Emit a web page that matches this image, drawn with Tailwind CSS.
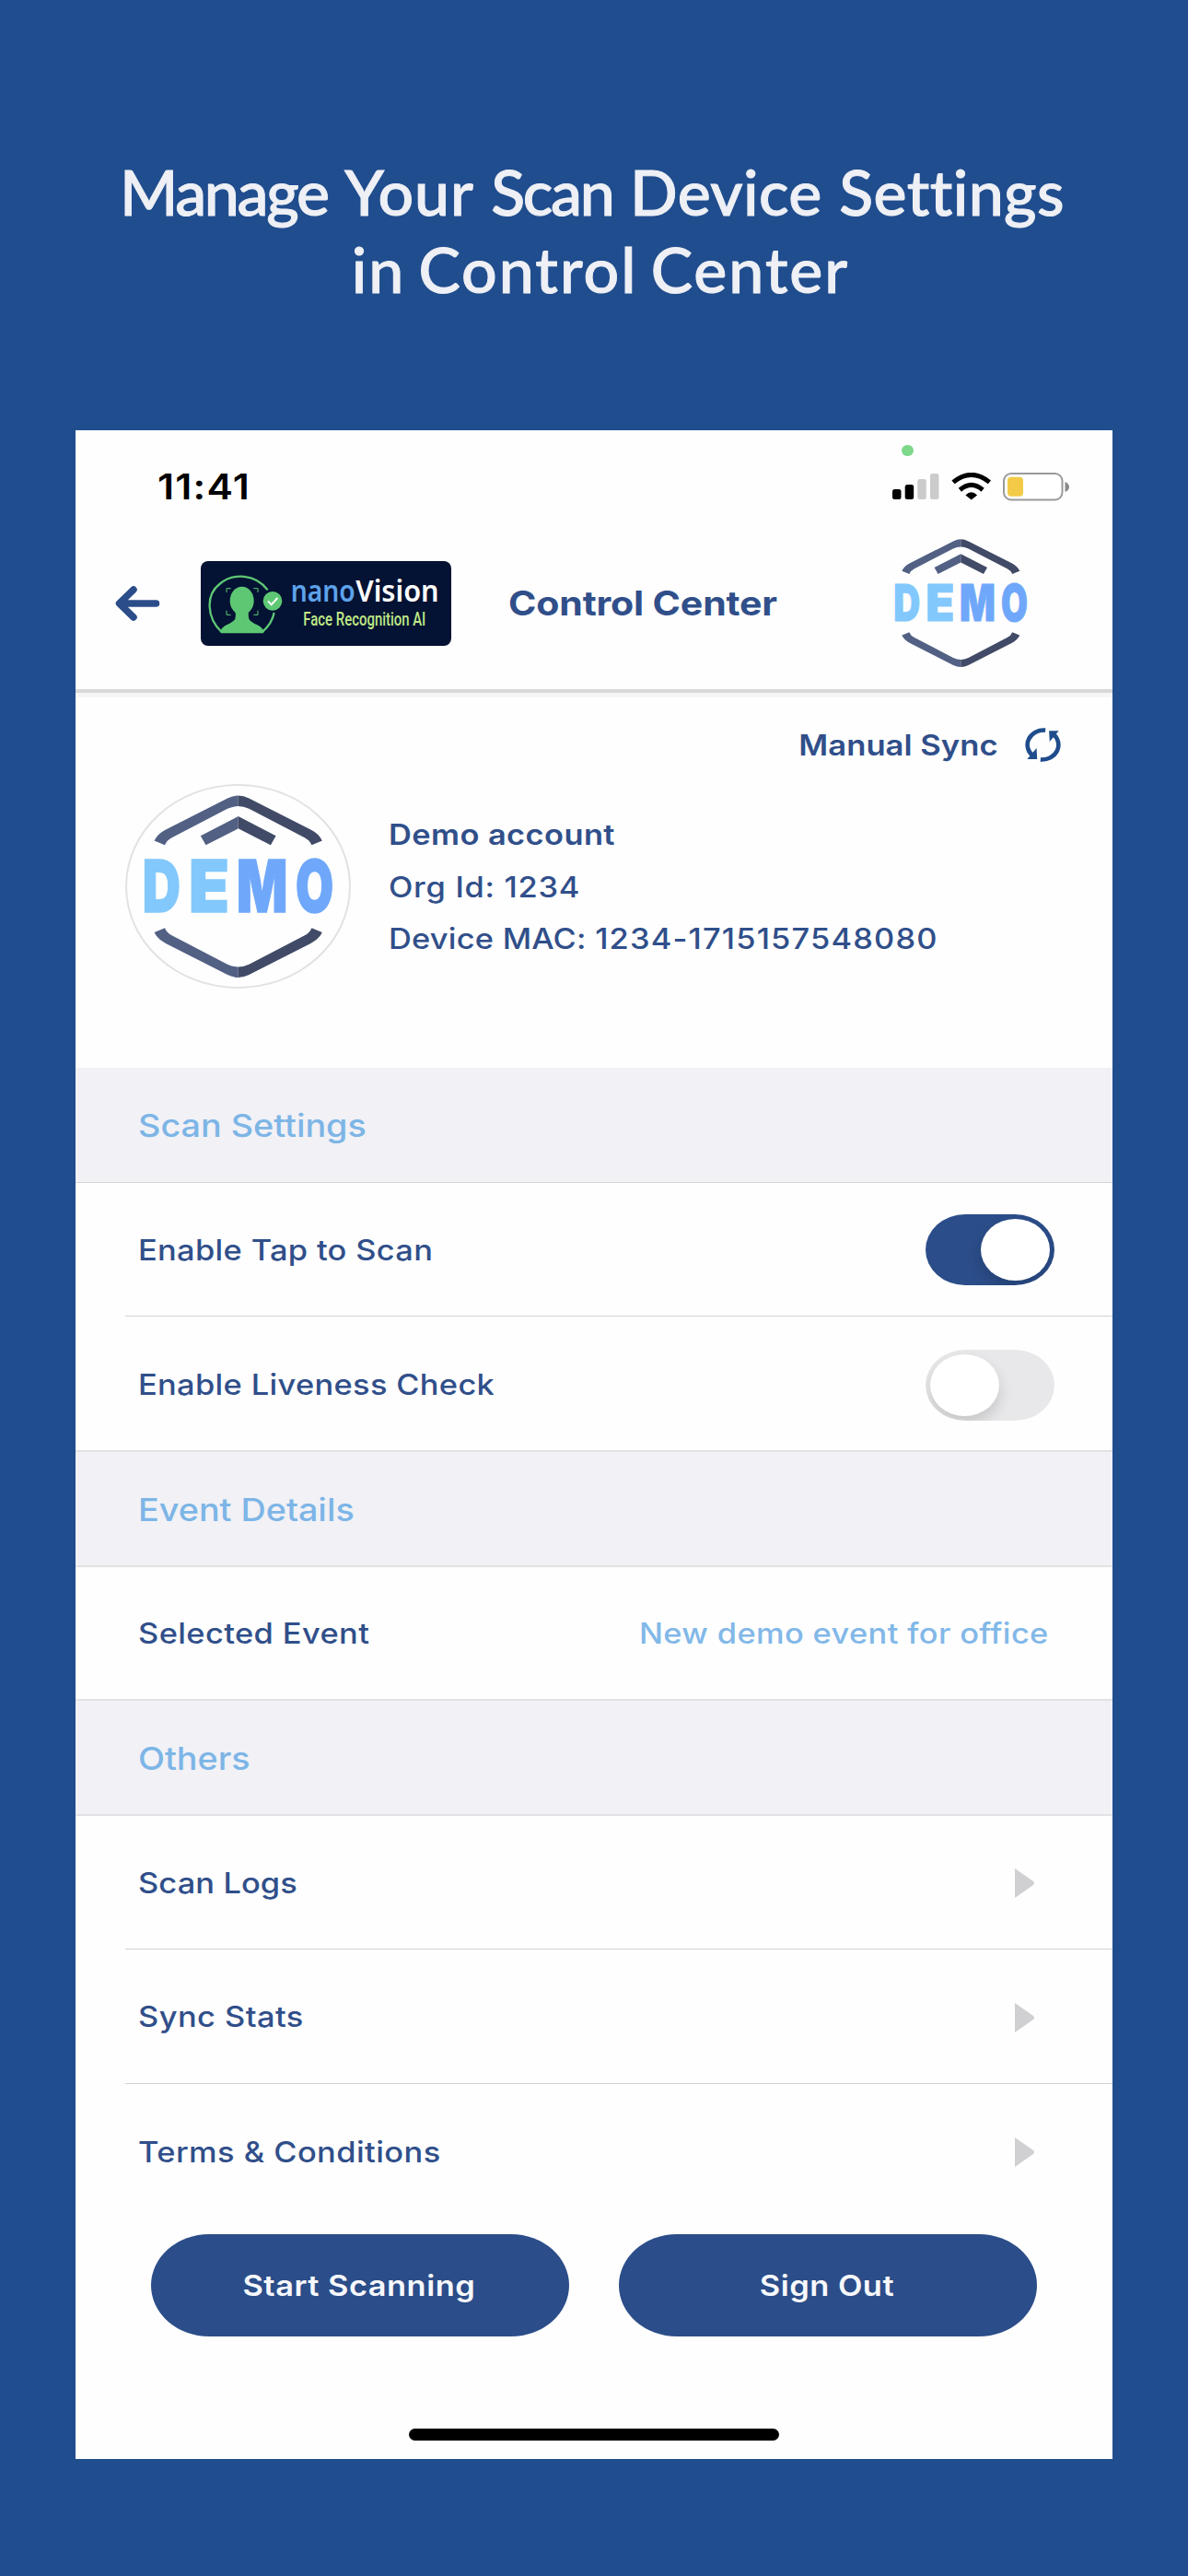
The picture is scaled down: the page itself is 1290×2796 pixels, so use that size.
<!DOCTYPE html>
<html lang="en">
<head>
<meta charset="utf-8">
<title>Control Center</title>
<script src="https://cdn.jsdelivr.net/npm/@tailwindcss/browser@4"></script>
</head>
<body class="w-[1290px] h-[2796px] overflow-hidden bg-[#204d8e] font-['Inter',sans-serif] flex flex-col items-center">

<!-- shared symbols -->
<svg class="hidden">
  <symbol id="demo" viewBox="156 863 206 198">
    <defs>
      <path id="bar" d="M258.7 863.5Q253 863.5 247 866.5L180 900.5Q171 905 167.6 912.5L179 917.3Q181 912 187 909L247 877.8Q253 875 258.7 875Z"/>
      <path id="chev" d="M258.7 886L217.8 907.3L223.5 917.3L258.7 899.3Z"/>
    </defs>
    <g fill="#526084">
      <use href="#bar"/><use href="#chev"/>
      <use href="#bar" transform="translate(0 1924.5) scale(1 -1)"/>
    </g>
    <g fill="#414a66" transform="translate(517.4 0) scale(-1 1)">
      <use href="#bar"/><use href="#chev"/>
      <use href="#bar" transform="translate(0 1924.5) scale(1 -1)"/>
    </g>
    <g font-family="Inter, sans-serif" font-size="79" font-weight="900" fill="#82c8fc" stroke="#82c8fc" stroke-width="1.5">
      <text transform="translate(154.8 990.2) scale(.723 1)">D</text>
      <text transform="translate(205 990.2) scale(.909 1)">E</text>
      <text transform="translate(257 990.2) scale(.733 1)" fill="#6fa8fa" stroke="#6fa8fa">M</text>
      <text transform="translate(321 990.2) scale(.672 1)" fill="#6fa8fa" stroke="#6fa8fa">O</text>
    </g>
  </symbol>
  <symbol id="tri" viewBox="0 0 21 32"><path d="M0 0L20 14Q22 16 20 18L0 32Z" fill="#d0d0d2"/></symbol>
</svg>

<h1 class="pt-[166px] text-center font-['Lato',sans-serif] font-medium text-[68px] leading-[84px] text-[#eef0f5] whitespace-nowrap [-webkit-text-stroke:1px_#eef0f5]">
  <span class="block tracking-[0.4px] [word-spacing:1px] -translate-x-[2px]"><span class="tracking-[-2.3px]">Manage</span> <span class="tracking-[0.9px]">Your</span> <span class="tracking-[-2.3px]">Scan</span> Device Settings</span>
  <span class="block tracking-[2px] [word-spacing:-5px] translate-x-[7px]">in Control Center</span>
</h1>

<main class="mt-[133px] w-[1126px] h-[2202px] bg-[#fefefe] flex flex-col text-[#304f8a] whitespace-nowrap">

  <!-- status bar -->
  <div class="relative h-[122px] shrink-0 flex items-center pl-[89px] pr-[47px] text-black">
    <span class="text-[38.5px] font-semibold tracking-[1.1px] origin-left scale-x-[1.11] translate-y-px">11:41</span>
    <span class="absolute left-[897px] top-[16px] w-[13px] h-[12px] rounded-full bg-[#7dd88a]"></span>
    <div class="ml-auto flex items-center">
      <svg class="w-[51px] h-[28px]" viewBox="0 0 51 28">
        <rect x="0" y="17" width="9.5" height="11" rx="2.5"/>
        <rect x="13.7" y="12" width="9.5" height="16" rx="2.5"/>
        <rect x="27.3" y="6" width="9.5" height="22" rx="2.5" fill="#cbcbcb"/>
        <rect x="41" y="0" width="9.5" height="28" rx="2.5" fill="#cbcbcb"/>
      </svg>
      <svg class="ml-[13px] w-[43.5px] h-[29.5px]" viewBox="0 0 130 88">
        <path d="M6 31Q65 -17 124 31M28 56Q65 24 102 56" fill="none" stroke="#000" stroke-width="15"/>
        <path d="M46 73Q65 54 84 73L65 88Z"/>
      </svg>
      <svg class="ml-[13px] w-[72px] h-[31px]" viewBox="0 0 72 31">
        <rect x="1" y="1" width="63.5" height="28.5" rx="8" fill="#fff" stroke="#9a9a9a" stroke-width="2"/>
        <rect x="5" y="4.8" width="17" height="21" rx="4" fill="#f3ca45"/>
        <path d="M67.5 10Q72 12 72 15.5T67.5 21Z" fill="#8a8a8a"/>
      </svg>
    </div>
  </div>

  <!-- header -->
  <header class="h-[163px] shrink-0 pb-[28px] pl-[43px] pr-[92px] flex items-center border-b-4 border-[#d8d8d8] shadow-[0_5px_0_#f6f6f6]">
    <svg class="w-[49px] h-[38px]" viewBox="0 0 49 38" fill="none" stroke="#2b4d89" stroke-width="7.5" stroke-linecap="round" stroke-linejoin="round"><path d="M44.5 19H5M20 4L4.5 19L20 34"/></svg>
    <svg class="ml-[44px] w-[272px] h-[92px]" viewBox="0 0 816 276">
      <rect width="816" height="276" rx="24" fill="#041233"/>
      <g fill="none" stroke="#5ec774" stroke-width="7"><path d="M66 231H204M68 231C18 184 16 110 61 75C106 37 178 41 218 94M239 168Q232 204 200 231"/>
      <path d="M84 102V89H98M172 89H186V102M84 161V175H98M172 175H186V161" stroke-width="3"/></g>
      <ellipse cx="134" cy="129" rx="39" ry="46" fill="#5ec774"/>
      <path d="M110 155Q116 172 112 188Q106 198 84 208Q68 216 62 232H207Q201 216 184 208Q162 198 157 188Q153 172 158 155Z" fill="#5ec774"/>
      <circle cx="234" cy="130" r="31" fill="#5ec774"/>
      <path d="M219 130L230 142L250 120" fill="none" stroke="#fff" stroke-width="6"/>
      <g font-family="'Noto Sans', sans-serif" font-size="99" font-weight="600">
        <text x="293" y="132" textLength="210" lengthAdjust="spacingAndGlyphs" fill="#5da3ea">nano</text>
        <text x="505" y="132" textLength="271" lengthAdjust="spacingAndGlyphs" fill="#fff">Vision</text>
      </g>
      <text x="334" y="210" textLength="399" lengthAdjust="spacingAndGlyphs" font-family="Roboto, sans-serif" font-size="58" font-weight="500" fill="#bfe986">Face Recognition AI</text>
    </svg>
    <h2 class="ml-[63px] text-[37px] font-bold tracking-[-0.15px] origin-left scale-x-[1.11] -translate-x-px">Control Center</h2>
    <svg class="ml-auto w-[145px] h-[139px] shrink-0" preserveAspectRatio="none"><use href="#demo"/></svg>
  </header>

  <!-- account -->
  <section class="pt-[38px] h-[407px] shrink-0">
    <div class="h-[37px] flex items-center justify-end pr-[55px]">
      <span class="text-[31.5px] font-semibold origin-right scale-x-[1.1]">Manual Sync</span>
      <svg class="ml-[28px] w-[41px] h-[37px]" viewBox="0 0 124 111">
        <path d="M70 7.5A53 48 0 0 0 30 92M54 103.500A53 48 0 0 0 94 19" fill="none" stroke="#1f4d8c" stroke-width="14"/>
        <path d="M10 102L43 102L41 66ZM114 9L82 9L84 45Z" fill="#1f4d8c"/>
      </svg>
    </div>
    <div class="mt-[24px] pl-[54px] flex items-center">
      <div class="w-[245px] h-[222px] rounded-[50%] border-2 border-[#e2e2e2] flex items-center justify-center">
        <svg class="w-[206px] h-[198px]"><use href="#demo"/></svg>
      </div>
      <div class="pl-[41px] text-[31px] leading-[56.5px] font-medium translate-y-px">
        <p class="font-semibold tracking-[0.38px] origin-left scale-x-[1.11]">Demo account</p>
        <p class="tracking-[0.65px] origin-left scale-x-[1.11]">Org Id: 1234</p>
        <p class="tracking-[0.2px] origin-left scale-x-[1.11]">Device MAC: <span class="tracking-[1.05px]">1234-1715157548080</span></p>
      </div>
    </div>
  </section>

  <!-- settings list -->
  <div class="h-[125px] shrink-0 bg-[#f1f1f6] border-b border-[#d6d6d8] flex items-center pl-[68px] text-[34px] font-medium text-[#7db5e6]"><span class="origin-left scale-x-[1.11]">Scan Settings</span></div>
  <div class="pl-[54px] shrink-0 text-[31px] font-medium tracking-[0.3px]">
    <div class="h-[145px] border-b border-[#d2d2d4] flex items-center justify-between pl-[14px] pr-[63px]">
      <span class="origin-left scale-x-[1.11] translate-y-px">Enable Tap to Scan</span>
      <div class="w-[140px] h-[77px] rounded-[43px/38.500px] bg-[#2b4d89] overflow-hidden flex items-center justify-end pr-[5px]"><div class="w-[75px] h-[67px] rounded-[50%] bg-white shadow-[0_8px_16px_rgba(0,0,0,0.15)]"></div></div>
    </div>
    <div class="h-[145px] flex items-center justify-between pt-[3px] pl-[14px] pr-[63px]">
      <span class="origin-left scale-x-[1.11]">Enable Liveness Check</span>
      <div class="w-[140px] h-[77px] rounded-[43px/38.500px] bg-[#e8e8ea] overflow-hidden flex items-center pl-[5px]"><div class="w-[75px] h-[67px] rounded-[50%] bg-white shadow-[0_8px_16px_rgba(0,0,0,0.15)]"></div></div>
    </div>
  </div>

  <div class="h-[127px] shrink-0 bg-[#f1f1f6] border-y-2 border-[#e2e2e4] flex items-center pl-[68px] text-[34px] font-medium text-[#7db5e6]"><span class="origin-left scale-x-[1.11] translate-y-px">Event Details</span></div>
  <div class="h-[143px] shrink-0 pl-[68px] pr-[69px] pt-[2px] flex items-center justify-between text-[31px]">
    <span class="font-medium tracking-[0.36px] origin-left scale-x-[1.11]">Selected Event</span>
    <span class="font-medium text-[#82b8e8] tracking-[0.33px] origin-right scale-x-[1.11]">New demo event for office</span>
  </div>

  <div class="h-[127px] shrink-0 bg-[#f1f1f6] border-y-2 border-[#e2e2e4] flex items-center pl-[68px] text-[34px] font-medium text-[#7db5e6]"><span class="origin-left scale-x-[1.11] translate-y-px">Others</span></div>
  <div class="pl-[54px] shrink-0 text-[31px] font-medium tracking-[0.3px]">
    <div class="h-[145px] border-b border-[#d2d2d4] flex items-center justify-between pt-[2px] pl-[14px] pr-[85px]"><span class="origin-left scale-x-[1.11] tracking-[0.1px]">Scan Logs</span><svg class="w-[21px] h-[32px]"><use href="#tri"/></svg></div>
    <div class="h-[146px] border-b border-[#d2d2d4] flex items-center justify-between pt-[2px] pl-[14px] pr-[85px]"><span class="origin-left scale-x-[1.11] tracking-[0.4px]">Sync Stats</span><svg class="w-[21px] h-[32px]"><use href="#tri"/></svg></div>
    <div class="h-[148px] flex items-center justify-between pl-[14px] pr-[85px]"><span class="origin-left scale-x-[1.11] tracking-[0.4px]">Terms &amp; Conditions</span><svg class="w-[21px] h-[32px]"><use href="#tri"/></svg></div>
  </div>

  <!-- actions -->
  <div class="mt-[15px] shrink-0 px-[82px] flex gap-[54px] text-[31px] font-semibold text-[#f7f8fc] tracking-[0.45px]">
    <button class="flex-1 h-[111px] rounded-[63px/55.500px] bg-[#2b4d89]"><span class="inline-block scale-x-[1.11] -translate-x-px translate-y-px">Start Scanning</span></button>
    <button class="flex-1 h-[111px] rounded-[63px/55.500px] bg-[#2b4d89]"><span class="inline-block scale-x-[1.11] -translate-x-px translate-y-px">Sign Out</span></button>
  </div>
  <div class="mt-[100px] mx-auto w-[402px] h-[13px] shrink-0 rounded-full bg-black"></div>
</main>
</body>
</html>
